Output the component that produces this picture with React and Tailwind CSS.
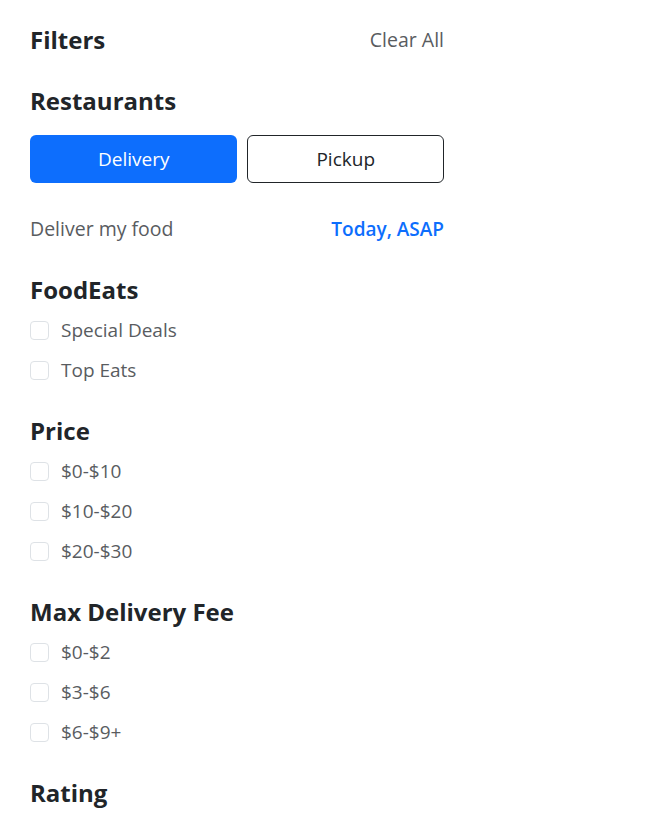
import React from "react";

function Check({ label }) {
  return (
    <label className="flex h-10 items-center gap-[12px]">
      <span className="h-[19px] w-[19px] shrink-0 rounded-[4px] border border-[#dee2e6] bg-white" />
      <span className="text-[19px] text-[#595c5f]">{label}</span>
    </label>
  );
}

function Section({ title, items }) {
  return (
    <div className="mt-[21px]">
      <h4 className="flex h-10 items-center text-[24px] font-bold text-[#212529]">{title}</h4>
      {items.map((i) => (
        <Check key={i} label={i} />
      ))}
    </div>
  );
}

export default function App() {
  return (
    <div
      className="min-h-screen bg-white pt-5"
      style={{ fontFamily: '"Open Sans", "Noto Sans", sans-serif' }}
    >
      <div className="ml-[30px] w-[414px]">
        <div className="flex h-10 items-center justify-between">
          <h3 className="text-[24px] font-bold text-[#212529]">Filters</h3>
          <button className="text-[19.5px] text-[#595c5f]">Clear All</button>
        </div>
        <h4 className="mt-[21px] flex h-10 items-center text-[24px] font-bold text-[#212529]">
          Restaurants
        </h4>
        <div className="mt-[14px] flex gap-[10px]">
          <button className="h-12 flex-auto rounded-[6px] bg-[#0d6efd] text-[19px] text-white">
            Delivery
          </button>
          <button className="h-12 flex-auto rounded-[6px] border border-[#212529] bg-white text-[19px] text-[#212529]">
            Pickup
          </button>
        </div>
        <div className="mt-[26px] flex h-10 items-center justify-between">
          <span className="text-[19.5px] text-[#595c5f]">Deliver my food</span>
          <span className="text-[19px] font-semibold text-[#0d6efd]">Today, ASAP</span>
        </div>
        <Section title="FoodEats" items={["Special Deals", "Top Eats"]} />
        <Section title="Price" items={["$0-$10", "$10-$20", "$20-$30"]} />
        <Section title="Max Delivery Fee" items={["$0-$2", "$3-$6", "$6-$9+"]} />
        <Section title="Rating" items={[]} />
      </div>
    </div>
  );
}
